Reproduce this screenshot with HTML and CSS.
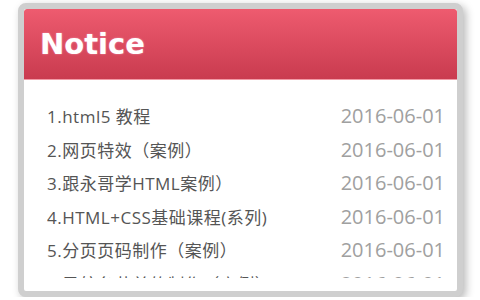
FILE: index.html
```html
<!DOCTYPE html>
<html lang="zh-CN">
  <head>
    <meta charset="UTF-8" />
    <meta name="viewport" content="width=device-width, initial-scale=1.0" />
    <title>Notice</title>
    <link rel="stylesheet" href="styles.css">
  </head>
  <body>
    <div class="notice">
      <div class="notice-head">
        <h2>Notice</h2>
      </div>
      <div class="notice-body">
        <ul class="notice-list">
          <li><span class="title">1.html5 教程</span><span class="date">2016-06-01</span></li>
          <li><span class="title">2.网页特效（案例）</span><span class="date">2016-06-01</span></li>
          <li><span class="title">3.跟永哥学HTML案例）</span><span class="date">2016-06-01</span></li>
          <li><span class="title">4.HTML+CSS基础课程(系列)</span><span class="date">2016-06-01</span></li>
          <li><span class="title">5.分页页码制作（案例）</span><span class="date">2016-06-01</span></li>
          <li><span class="title">6.导航条菜单的制作（案例）</span><span class="date">2016-06-01</span></li>
        </ul>
      </div>
    </div>
  </body>
</html>
```

FILE: styles.css
```css
body {
  margin: 0;
  padding: 0;
  background-color: #fff;
  font-family: "Open Sans", "Noto Sans CJK SC", sans-serif;
}
.notice {
  width: 433px;
  height: 282px;
  margin: 3px 0 0 18px;
  border: 6px solid #cfcfcf;
  border-radius: 8px;
  background-color: #fff;
  box-shadow: 3px 3px 8px rgba(0, 0, 0, 0.28);
  overflow: hidden;
}
.notice-head {
  height: 70px;
  border-bottom: 1px solid #f29aa6;
  border-radius: 3px 3px 0 0;
  background: linear-gradient(#ee5b6f, #c93b4f);
  display: flex;
  align-items: center;
  padding-left: 16px;
}
.notice-head h2 {
  margin: 0;
  font-family: "DejaVu Sans", sans-serif;
  font-size: 29px;
  font-weight: bold;
  color: #fff;
  text-shadow: 0 0 2px rgba(255, 200, 230, 0.6);
}
.notice-body {
  padding: 19px 12px 0 23px;
}
.notice-list {
  list-style: none;
  margin: 0;
  padding: 0;
  height: 179px;
  overflow: hidden;
}
.notice-list li {
  display: flex;
  justify-content: space-between;
  align-items: center;
  height: 33.5px;
}
.title {
  font-size: 17px;
  letter-spacing: 0.5px;
  color: #555;
}
.date {
  font-size: 20px;
  color: #a0a0a0;
}
```
